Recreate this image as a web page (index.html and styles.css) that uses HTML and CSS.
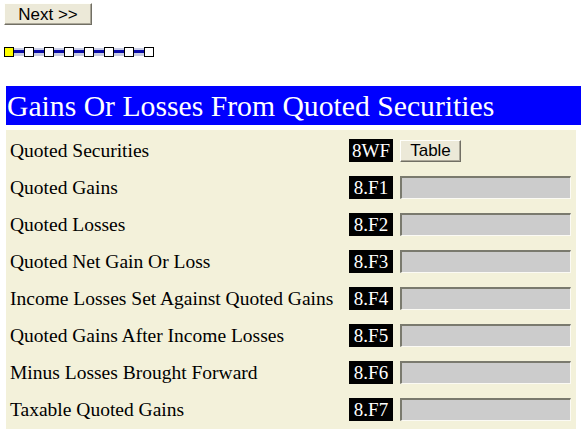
FILE: index.html
```html
<!DOCTYPE html>
<html>
<head>
<meta charset="utf-8">
<link rel="stylesheet" href="styles.css">
</head>
<body>
<div class="top">
  <button class="btn next">Next &gt;&gt;</button>
</div>
<div class="progress">
  <span class="step current"></span><span class="link"></span>
  <span class="step"></span><span class="link"></span>
  <span class="step"></span><span class="link"></span>
  <span class="step"></span><span class="link"></span>
  <span class="step"></span><span class="link"></span>
  <span class="step"></span><span class="link"></span>
  <span class="step"></span><span class="link"></span>
  <span class="step"></span>
</div>
<h1 class="title">Gains Or Losses From Quoted Securities</h1>
<div class="form">
  <div class="label">Quoted Securities</div><div class="code">8WF</div><div class="field"><button class="btn table">Table</button></div>
  <div class="label">Quoted Gains</div><div class="code">8.F1</div><div class="field"><span class="input"></span></div>
  <div class="label">Quoted Losses</div><div class="code">8.F2</div><div class="field"><span class="input"></span></div>
  <div class="label">Quoted Net Gain Or Loss</div><div class="code">8.F3</div><div class="field"><span class="input"></span></div>
  <div class="label">Income Losses Set Against Quoted Gains</div><div class="code">8.F4</div><div class="field"><span class="input"></span></div>
  <div class="label">Quoted Gains After Income Losses</div><div class="code">8.F5</div><div class="field"><span class="input"></span></div>
  <div class="label">Minus Losses Brought Forward</div><div class="code">8.F6</div><div class="field"><span class="input"></span></div>
  <div class="label">Taxable Quoted Gains</div><div class="code">8.F7</div><div class="field"><span class="input"></span></div>
</div>
</body>
</html>
```
FILE: styles.css
```css
html, body {
  margin: 0;
  padding: 0;
  background: #ffffff;
}
body {
  font-family: "Liberation Serif", "Times New Roman", serif;
  color: #000;
  width: 581px;
  overflow: hidden;
}
.top {
  padding: 3px 0 0 4px;
  height: 22px;
}
.btn {
  font-family: "Liberation Sans", Arial, sans-serif;
  font-size: 17px;
  color: #000;
  background: #ece9d8;
  border-style: solid;
  border-width: 1px;
  border-color: #fffffb #716f64 #716f64 #fffffb;
  box-shadow: inset -1px -1px 0 #aca899;
  padding: 0;
  margin: 0;
  cursor: default;
}
.next {
  width: 88px;
  height: 22px;
  line-height: 19px;
}
.progress {
  display: flex;
  align-items: center;
  margin: 21px 0 0 4px;
  height: 11px;
}
.step {
  box-sizing: border-box;
  width: 10px;
  height: 10px;
  border: 1px solid #000;
  background: #fff;
  flex: none;
}
.step.current {
  background: #ffff00;
}
.link {
  width: 10px;
  height: 8px;
  background: #c9cde6;
  display: flex;
  align-items: center;
  flex: none;
}
.link::before {
  content: "";
  display: block;
  width: 100%;
  height: 3px;
  background: #0a0aa8;
}
.title {
  margin: 29px 0 0 6px;
  height: 39px;
  background: #0000ff;
  color: #fff;
  font-weight: normal;
  font-size: 29.7px;
  line-height: 40px;
  padding: 0 0 0 1px;
  white-space: nowrap;
}
.form {
  margin: 5px 5px 0 6px;
  background: #f3f1da;
  padding: 9px 5px 8px 4px;
  display: grid;
  grid-template-columns: 1fr 44px 171px;
  column-gap: 7px;
  row-gap: 14px;
  align-items: center;
}
.label {
  font-size: 19.5px;
  line-height: 22px;
  white-space: nowrap;
}
.code {
  background: #000;
  color: #fff;
  font-size: 19px;
  height: 23px;
  line-height: 23px;
  text-align: center;
  white-space: nowrap;
  overflow: hidden;
}
.field {
  height: 23px;
  display: flex;
  align-items: center;
}
.table {
  width: 61px;
  height: 22px;
  line-height: 19px;
}
.input {
  box-sizing: border-box;
  display: block;
  width: 171px;
  height: 23px;
  background: #cccccc;
  border-style: solid;
  border-width: 2px 1px 1px 2px;
  border-color: #7a7a6e #fbfaf4 #fbfaf4 #7a7a6e;
}
```
